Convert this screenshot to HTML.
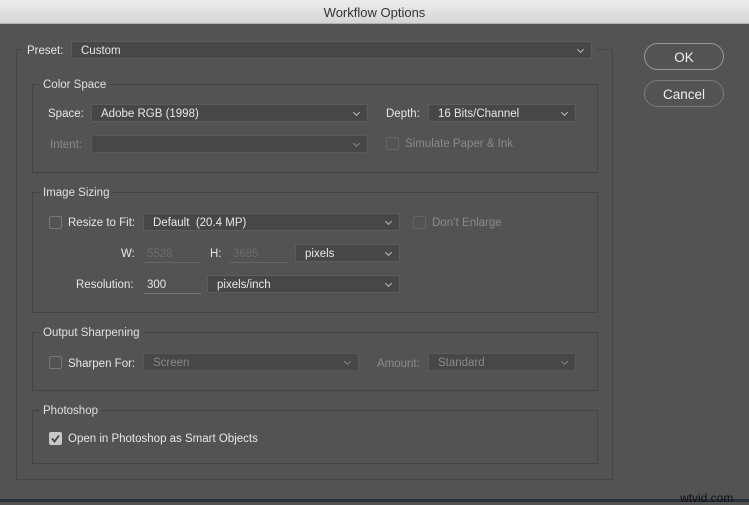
<!DOCTYPE html>
<html><head><meta charset="utf-8"><style>
*{box-sizing:border-box;margin:0;padding:0}
body{width:749px;height:502px;overflow:hidden;background:#535353;position:relative;font-family:"Liberation Sans",sans-serif;font-size:11.5px;color:#e6e6e6}
.a{position:absolute}
.t{margin-top:2px}
.title{left:0;top:0;width:749px;height:24px;background:linear-gradient(#ececec,#d6d6d6);border-bottom:1px solid #b0b0b0;color:#333;font-size:13px;text-align:center;line-height:26px}
.box{border:1px solid #444}
.lg{background:#535353;padding:0 3px;color:#e0e0e0}
.dd{background:#474747;border:1px solid #5d5d5d;border-radius:2px;height:18px;line-height:18px;padding-left:9px;color:#e8e8e8}
.dd.dis{color:#8a8a8a;border-color:#595959}
.dd::after{content:"";position:absolute;right:8px;top:5px;width:4px;height:4px;border-right:1px solid #bbb;border-bottom:1px solid #bbb;transform:rotate(45deg)}
.dd.dis::after{border-color:#888}
.cb{width:13px;height:13px;border:1px solid #777;border-radius:2px}
.cb.dis{border-color:#666}
.dim{color:#8a8a8a}
.in{border-bottom:1px solid #777;height:19px;line-height:20px;padding-left:3px}
.btn{width:80px;height:27px;border:1px solid #999;border-radius:14px;text-align:center;line-height:27px;font-size:13.5px;color:#eee}
</style></head><body>
<div class="a title">Workflow Options</div>
<div class="a box" style="left:16px;top:49px;width:597px;height:431px;border-color:#464646"></div>
<div class="a" style="left:22px;top:40px;width:575px;height:20px;background:#535353"></div>
<div class="a t" style="left:27px;top:43px">Preset:</div>
<div class="a dd" style="left:71px;top:41px;width:521px">Custom</div>

<div class="a box" style="left:32px;top:84px;width:566px;height:89px"></div>
<div class="a lg t" style="left:40px;top:77px">Color Space</div>
<div class="a t" style="left:48px;top:106px">Space:</div>
<div class="a dd" style="left:91px;top:104px;width:277px">Adobe RGB (1998)</div>
<div class="a t" style="left:386px;top:106px">Depth:</div>
<div class="a dd" style="left:428px;top:104px;width:148px">16 Bits/Channel</div>
<div class="a dim t" style="left:50px;top:137px">Intent:</div>
<div class="a dd dis" style="left:91px;top:135px;width:277px"></div>
<div class="a cb dis" style="left:386px;top:137px"></div>
<div class="a dim t" style="left:405px;top:136px">Simulate Paper &amp; Ink</div>

<div class="a box" style="left:32px;top:192px;width:566px;height:121px"></div>
<div class="a lg t" style="left:40px;top:185px">Image Sizing</div>
<div class="a cb" style="left:49px;top:216px"></div>
<div class="a t" style="left:68px;top:215px">Resize to Fit:</div>
<div class="a dd" style="left:143px;top:213px;width:257px">Default&nbsp; (20.4 MP)</div>
<div class="a cb dis" style="left:413px;top:216px"></div>
<div class="a dim t" style="left:432px;top:215px">Don’t Enlarge</div>
<div class="a t" style="left:121px;top:246px">W:</div>
<div class="a in dim" style="left:144px;top:244px;width:57px;color:#6c6c6c;border-color:#666">5528</div>
<div class="a t" style="left:210px;top:246px">H:</div>
<div class="a in dim" style="left:230px;top:244px;width:58px;color:#6c6c6c;border-color:#666">3685</div>
<div class="a dd" style="left:295px;top:244px;width:105px">pixels</div>
<div class="a t" style="left:76px;top:277px">Resolution:</div>
<div class="a in" style="left:144px;top:275px;width:57px">300</div>
<div class="a dd" style="left:207px;top:275px;width:193px">pixels/inch</div>

<div class="a box" style="left:32px;top:332px;width:566px;height:59px"></div>
<div class="a lg t" style="left:40px;top:325px">Output Sharpening</div>
<div class="a cb" style="left:49px;top:356px"></div>
<div class="a t" style="left:68px;top:356px">Sharpen For:</div>
<div class="a dd dis" style="left:143px;top:353px;width:216px">Screen</div>
<div class="a dim t" style="left:377px;top:356px">Amount:</div>
<div class="a dd dis" style="left:428px;top:353px;width:148px">Standard</div>

<div class="a box" style="left:32px;top:410px;width:566px;height:54px"></div>
<div class="a lg t" style="left:40px;top:403px">Photoshop</div>
<div class="a" style="left:49px;top:432px;width:13px;height:13px;background:#c8c8c8;border-radius:2px"><svg width="13" height="13" viewBox="0 0 13 13" style="position:absolute;left:0;top:0"><path d="M3 6.5l2.5 3L10 3.5" fill="none" stroke="#444" stroke-width="1.8"/></svg></div>
<div class="a t" style="left:68px;top:431px">Open in Photoshop as Smart Objects</div>

<div class="a btn" style="left:644px;top:43px">OK</div>
<div class="a btn" style="left:644px;top:80px;border-color:#7a7a7a">Cancel</div>

<div class="a" style="left:0;top:499px;width:749px;height:3px;background:#2a3138"></div>
<div class="a" style="left:680px;top:491px;color:#111;font-size:12px">wtvid.com</div>
</body></html>
